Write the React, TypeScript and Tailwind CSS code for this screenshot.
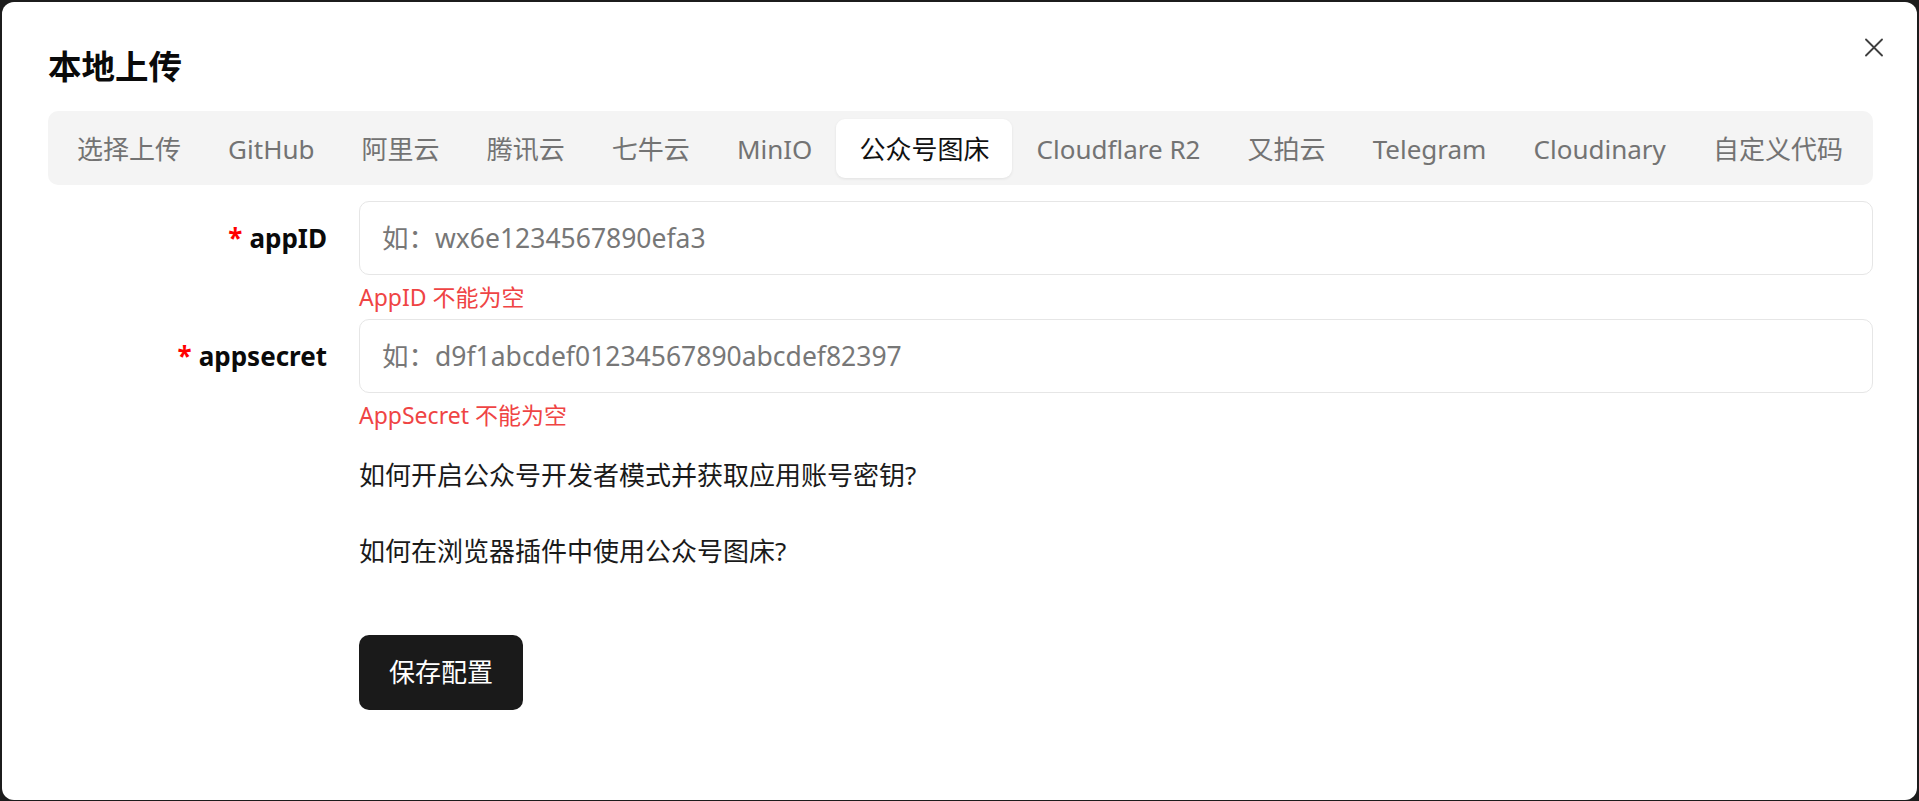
import { useState } from "react";

const tabs = [
  "选择上传",
  "GitHub",
  "阿里云",
  "腾讯云",
  "七牛云",
  "MinIO",
  "公众号图床",
  "Cloudflare R2",
  "又拍云",
  "Telegram",
  "Cloudinary",
  "自定义代码",
];

const fields = [
  {
    label: "appID",
    placeholder: "如：wx6e1234567890efa3",
    error: "AppID 不能为空",
  },
  {
    label: "appsecret",
    placeholder: "如：d9f1abcdef01234567890abcdef82397",
    error: "AppSecret 不能为空",
  },
];

export default function App() {
  const [active, setActive] = useState("公众号图床");

  return (
    <div
      className="w-full h-[801px] bg-[#1c1c1c] pt-[2px] px-[2px] pb-[1px]"
      style={{ fontFamily: '"Noto Sans", "Noto Sans CJK SC", sans-serif' }}
    >
      <div className="relative h-full bg-white rounded-[12px] pl-[46px] pr-[44px] pt-[40px]">
        <button
          className="absolute top-[36px] right-[34px] text-[#3f3f3f]"
          aria-label="关闭"
        >
          <svg width="18" height="19" viewBox="0 0 18 19" fill="none">
            <path
              d="M1 1.5 17 17.5M17 1.5 1 17.5"
              stroke="currentColor"
              strokeWidth="1.8"
              strokeLinecap="round"
            />
          </svg>
        </button>

        <h2 className="text-[33.5px] leading-[48px] font-bold text-[#0a0a0a]">
          本地上传
        </h2>

        <div className="mt-[21px] h-[74px] bg-[#f4f4f4] rounded-[10px] pl-[6px] pr-[7px] pt-[8px] pb-[7px] flex justify-between">
          {tabs.map((tab) => (
            <button
              key={tab}
              onClick={() => setActive(tab)}
              className={`h-full px-[23px] rounded-[9px] text-[26px] leading-none whitespace-nowrap ${
                active === tab
                  ? "bg-white text-[#111] shadow-[0_1px_3px_rgba(0,0,0,0.08)]"
                  : "text-[#737373]"
              }`}
            >
              {tab}
            </button>
          ))}
        </div>

        <div className="mt-[16px] grid grid-cols-[279px_1fr] gap-x-[32px]">
          {fields.map((f) => (
            <div key={f.label} className="contents">
              <label className="h-[74px] flex items-center justify-end text-[26px] font-bold text-[#0a0a0a]">
                <span className="text-[#ff0000] mr-[7px]">*</span>
                {f.label}
              </label>
              <div>
                <input
                  placeholder={f.placeholder}
                  className="w-full h-[74px] rounded-[10px] border border-[#e6e6e6] px-[22px] text-[26.5px] text-[#111] placeholder:text-[#777] outline-none"
                />
                <p className="py-[7px] text-[23px] leading-[30px] text-[#ef4444]">
                  {f.error}
                </p>
              </div>
            </div>
          ))}

          <div />
          <div className="pt-[18px]">
            <p className="text-[26px] leading-[40px] text-[#1a1a1a]">
              如何开启公众号开发者模式并获取应用账号密钥?
            </p>
            <p className="mt-[36px] text-[26px] leading-[40px] text-[#1a1a1a]">
              如何在浏览器插件中使用公众号图床?
            </p>
            <button className="mt-[64px] w-[164px] h-[75px] rounded-[10px] bg-[#1a1a1a] text-white text-[26px]">
              保存配置
            </button>
          </div>
        </div>
      </div>
    </div>
  );
}
